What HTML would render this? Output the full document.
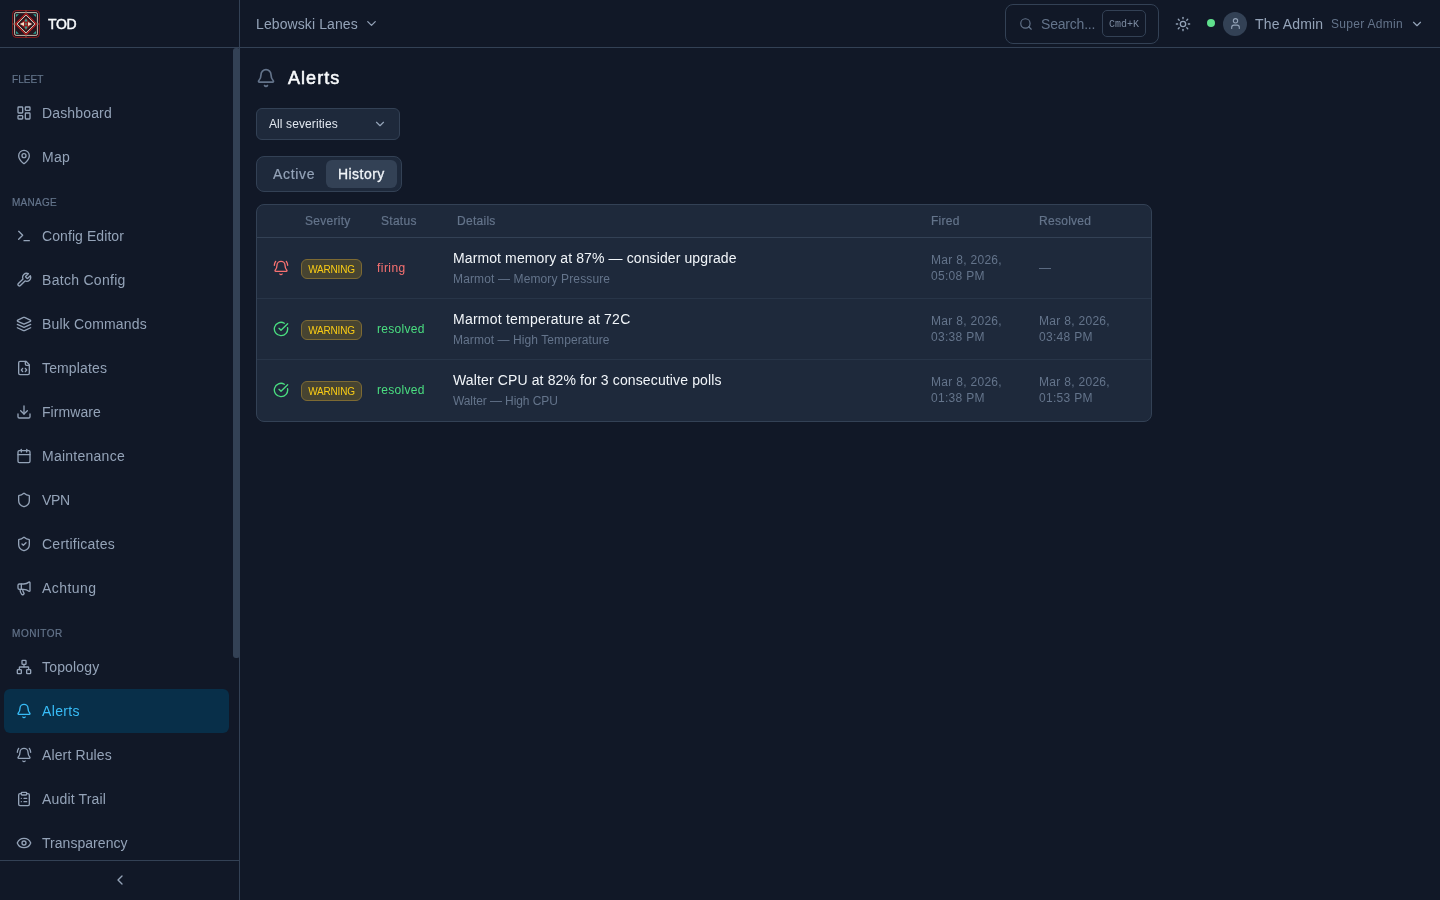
<!DOCTYPE html><html><head><meta charset="utf-8"><style>
*{box-sizing:border-box;margin:0;padding:0}
html,body{width:1440px;height:900px;overflow:hidden;-webkit-font-smoothing:antialiased;background:#111827;font-family:"Liberation Sans",sans-serif;color:#e2e8f0}
.a{position:absolute;white-space:nowrap}
svg.i{position:absolute;fill:none;stroke:currentColor;stroke-linecap:round;stroke-linejoin:round}
.sec{position:absolute;left:12px;font-size:10px;letter-spacing:0.05px;color:#64748b;line-height:12px;-webkit-text-stroke:0.2px #64748b}
.it{position:absolute;left:4px;width:225px;height:44px;border-radius:6px;color:#94a3b8;font-size:14px}
.it span{position:absolute;left:38px;top:12px;line-height:20px;letter-spacing:0.25px}
.it.act{background:#082f49;color:#38bdf8}
.th{position:absolute;top:213px;font-size:12px;line-height:16px;color:#64748b;letter-spacing:0.28px;-webkit-text-stroke:0.2px #64748b}
.badge{position:absolute;width:61px;height:20px;border-radius:6px;border:1px solid #7d6a33;background:rgba(234,179,8,0.2);color:#facc15;font-size:10px;line-height:20px;text-align:center;letter-spacing:-0.2px}
.t1{position:absolute;left:453px;font-size:14px;line-height:20px;color:#f1f5f9;letter-spacing:0.11px}
.t2{position:absolute;left:453px;font-size:12px;line-height:16px;color:#64748b;letter-spacing:0.13px}
.dt{position:absolute;font-size:12px;line-height:16px;color:#64748b;letter-spacing:0.3px}
.st{position:absolute;left:377px;font-size:12px;line-height:16px;letter-spacing:0.45px}
</style></head><body><div id="root" style="position:absolute;left:0;top:0;width:1440px;height:900px;will-change:transform">
<div class="a" style="left:0;top:0;width:240px;height:900px;border-right:1px solid #334155"></div>
<div class="a" style="left:0;top:47px;width:240px;height:1px;background:#334155"></div>
<svg class="a" style="left:12px;top:9.5px" width="28" height="28" viewBox="0 0 28 28">
  <rect x="0.6" y="0.6" width="26.8" height="26.8" rx="3.5" fill="#1a1220" stroke="#911d1d" stroke-width="1"/>
  <rect x="2.6" y="2.6" width="22.8" height="22.8" rx="1.5" fill="#26161f" stroke="#c4bdad" stroke-width="1"/>
  <path d="M14 0.5V3 M14 25V27.5 M0.5 14H3 M25 14H27.5" stroke="#8a8070" stroke-width="0.8"/>
  <path d="M14 3.4 L24.6 14 L14 24.6 L3.4 14Z" fill="none" stroke="#b42020" stroke-width="1.3"/>
  <path d="M14 5.1 L22.9 14 L14 22.9 L5.1 14Z" fill="none" stroke="#ddd5c2" stroke-width="1"/>
  <path d="M14 8 L20 14 L14 20 L8 14Z" fill="#951b1b"/>
  <path d="M7.8 14 L12 11.9 L12 16.1Z M20.2 14 L16 11.9 L16 16.1Z" fill="#efe4cc"/>
  <path d="M14 8.3 L15.7 11.6 L12.3 11.6Z M14 19.7 L15.7 16.4 L12.3 16.4Z" fill="#2aa597"/>
  <circle cx="14" cy="14" r="1.2" fill="#2aa597" stroke="#b42020" stroke-width="0.6"/>
  <path d="M4 4.2 L7 4.2 L4 7Z M24 4.2 L21 4.2 L24 7Z M4 23.8 L7 23.8 L4 21Z M24 23.8 L21 23.8 L24 21Z" fill="#25a093"/>
</svg>
<div class="a" style="left:48px;top:14px;font-size:14px;line-height:20px;color:#f8fafc;letter-spacing:-0.3px;-webkit-text-stroke:0.45px #f8fafc">TOD</div>
<div class="a" style="left:233px;top:48px;width:7px;height:610px;background:#334155;border-radius:3px 3px 3px 3px"></div>
<div class="sec" style="top:74.4px;letter-spacing:0.05px">FLEET</div>
<div class="sec" style="top:197.4px;letter-spacing:0.25px">MANAGE</div>
<div class="sec" style="top:628.4px;letter-spacing:0.55px">MONITOR</div>
<div class="it" style="top:91px"><svg class="i" style="left:12px;top:14px;width:16px;height:16px;color:#94a3b8;" viewBox="0 0 24 24" stroke-width="2"><rect width="7" height="9" x="3" y="3" rx="1"/><rect width="7" height="5" x="14" y="3" rx="1"/><rect width="7" height="9" x="14" y="12" rx="1"/><rect width="7" height="5" x="3" y="16" rx="1"/></svg><span style="letter-spacing:0.15px">Dashboard</span></div>
<div class="it" style="top:135px"><svg class="i" style="left:12px;top:14px;width:16px;height:16px;color:#94a3b8;" viewBox="0 0 24 24" stroke-width="2"><path d="M20 10c0 4.993-5.539 10.193-7.399 11.799a1 1 0 0 1-1.202 0C9.539 20.193 4 14.993 4 10a8 8 0 0 1 16 0"/><circle cx="12" cy="10" r="3"/></svg><span style="letter-spacing:0.25px">Map</span></div>
<div class="it" style="top:214px"><svg class="i" style="left:12px;top:14px;width:16px;height:16px;color:#94a3b8;" viewBox="0 0 24 24" stroke-width="2"><polyline points="4 17 10 11 4 5"/><line x1="12" x2="20" y1="19" y2="19"/></svg><span style="letter-spacing:0.08px">Config Editor</span></div>
<div class="it" style="top:258px"><svg class="i" style="left:12px;top:14px;width:16px;height:16px;color:#94a3b8;" viewBox="0 0 24 24" stroke-width="2"><path d="M14.7 6.3a1 1 0 0 0 0 1.4l1.6 1.6a1 1 0 0 0 1.4 0l3.77-3.77a6 6 0 0 1-7.94 7.94l-6.91 6.91a2.12 2.12 0 0 1-3-3l6.91-6.91a6 6 0 0 1 7.940-7.94l-3.76 3.76z"/></svg><span style="letter-spacing:0.29px">Batch Config</span></div>
<div class="it" style="top:302px"><svg class="i" style="left:12px;top:14px;width:16px;height:16px;color:#94a3b8;" viewBox="0 0 24 24" stroke-width="2"><path d="m12.83 2.18a2 2 0 0 0-1.66 0L2.6 6.08a1 1 0 0 0 0 1.83l8.58 3.91a2 2 0 0 0 1.66 0l8.58-3.9a1 1 0 0 0 0-1.83Z"/><path d="m22 17.65-9.17 4.16a2 2 0 0 1-1.66 0L2 17.65"/><path d="m22 12.65-9.17 4.16a2 2 0 0 1-1.66 0L2 12.65"/></svg><span style="letter-spacing:0.17px">Bulk Commands</span></div>
<div class="it" style="top:346px"><svg class="i" style="left:12px;top:14px;width:16px;height:16px;color:#94a3b8;" viewBox="0 0 24 24" stroke-width="2"><path d="M10 12.5 8 15l2 2.5"/><path d="m14 12.5 2 2.5-2 2.5"/><path d="M14 2v4a2 2 0 0 0 2 2h4"/><path d="M15 2H6a2 2 0 0 0-2 2v16a2 2 0 0 0 2 2h12a2 2 0 0 0 2-2V7z"/></svg><span style="letter-spacing:0.14px">Templates</span></div>
<div class="it" style="top:390px"><svg class="i" style="left:12px;top:14px;width:16px;height:16px;color:#94a3b8;" viewBox="0 0 24 24" stroke-width="2"><path d="M21 15v4a2 2 0 0 1-2 2H5a2 2 0 0 1-2-2v-4"/><polyline points="7 10 12 15 17 10"/><line x1="12" x2="12" y1="15" y2="3"/></svg><span style="letter-spacing:0.06px">Firmware</span></div>
<div class="it" style="top:434px"><svg class="i" style="left:12px;top:14px;width:16px;height:16px;color:#94a3b8;" viewBox="0 0 24 24" stroke-width="2"><path d="M8 2v4"/><path d="M16 2v4"/><rect width="18" height="18" x="3" y="4" rx="2"/><path d="M3 10h18"/></svg><span style="letter-spacing:0.25px">Maintenance</span></div>
<div class="it" style="top:478px"><svg class="i" style="left:12px;top:14px;width:16px;height:16px;color:#94a3b8;" viewBox="0 0 24 24" stroke-width="2"><path d="M20 13c0 5-3.5 7.5-7.66 8.95a1 1 0 0 1-.67-.01C7.5 20.5 4 18 4 13V6a1 1 0 0 1 1-1c2 0 4.5-1.2 6.24-2.72a1.17 1.17 0 0 1 1.52 0C14.51 3.81 17 5 19 5a1 1 0 0 1 1 1z"/></svg><span style="letter-spacing:-0.3px">VPN</span></div>
<div class="it" style="top:522px"><svg class="i" style="left:12px;top:14px;width:16px;height:16px;color:#94a3b8;" viewBox="0 0 24 24" stroke-width="2"><path d="M20 13c0 5-3.5 7.5-7.66 8.95a1 1 0 0 1-.67-.01C7.5 20.5 4 18 4 13V6a1 1 0 0 1 1-1c2 0 4.5-1.2 6.24-2.72a1.17 1.17 0 0 1 1.52 0C14.51 3.81 17 5 19 5a1 1 0 0 1 1 1z"/><path d="m9 12 2 2 4-4"/></svg><span style="letter-spacing:0.25px">Certificates</span></div>
<div class="it" style="top:566px"><svg class="i" style="left:12px;top:14px;width:16px;height:16px;color:#94a3b8;" viewBox="0 0 24 24" stroke-width="2"><path d="M11 6a13 13 0 0 0 8.4-2.8A1 1 0 0 1 21 4v12a1 1 0 0 1-1.6.8A13 13 0 0 0 11 14H5a2 2 0 0 1-2-2V8a2 2 0 0 1 2-2z"/><path d="M6 14a12 12 0 0 0 2.4 7.2 2 2 0 0 0 3.2-2.4A8 8 0 0 1 10 14"/><path d="M8 6v8"/></svg><span style="letter-spacing:0.45px">Achtung</span></div>
<div class="it" style="top:645px"><svg class="i" style="left:12px;top:14px;width:16px;height:16px;color:#94a3b8;" viewBox="0 0 24 24" stroke-width="2"><rect x="16" y="16" width="6" height="6" rx="1"/><rect x="2" y="16" width="6" height="6" rx="1"/><rect x="9" y="2" width="6" height="6" rx="1"/><path d="M5 16v-3a1 1 0 0 1 1-1h12a1 1 0 0 1 1 1v3"/><path d="M12 12V8"/></svg><span style="letter-spacing:0.18px">Topology</span></div>
<div class="it act" style="top:689px"><svg class="i" style="left:12px;top:14px;width:16px;height:16px;color:#38bdf8;" viewBox="0 0 24 24" stroke-width="2"><path d="M10.268 21a2 2 0 0 0 3.464 0"/><path d="M3.262 15.326A1 1 0 0 0 4 17h16a1 1 0 0 0 .74-1.673C19.41 13.956 18 12.499 18 8A6 6 0 0 0 6 8c0 4.499-1.411 5.956-2.738 7.326"/></svg><span style="letter-spacing:0.35px">Alerts</span></div>
<div class="it" style="top:733px"><svg class="i" style="left:12px;top:14px;width:16px;height:16px;color:#94a3b8;" viewBox="0 0 24 24" stroke-width="2"><path d="M10.268 21a2 2 0 0 0 3.464 0"/><path d="M22 8c0-2.3-.8-4.3-2-6"/><path d="M3.262 15.326A1 1 0 0 0 4 17h16a1 1 0 0 0 .74-1.673C19.41 13.956 18 12.499 18 8A6 6 0 0 0 6 8c0 4.499-1.411 5.956-2.738 7.326"/><path d="M4 2C2.800 3.7 2 5.7 2 8"/></svg><span style="letter-spacing:0.12px">Alert Rules</span></div>
<div class="it" style="top:777px"><svg class="i" style="left:12px;top:14px;width:16px;height:16px;color:#94a3b8;" viewBox="0 0 24 24" stroke-width="2"><rect width="8" height="4" x="8" y="2" rx="1" ry="1"/><path d="M16 4h2a2 2 0 0 1 2 2v14a2 2 0 0 1-2 2H6a2 2 0 0 1-2-2V6a2 2 0 0 1 2-2h2"/><path d="M12 11h4"/><path d="M12 16h4"/><path d="M8 11h.01"/><path d="M8 16h.01"/></svg><span style="letter-spacing:0.16px">Audit Trail</span></div>
<div class="it" style="top:821px"><svg class="i" style="left:12px;top:14px;width:16px;height:16px;color:#94a3b8;" viewBox="0 0 24 24" stroke-width="2"><path d="M2.062 12.348a1 1 0 0 1 0-.696 10.75 10.75 0 0 1 19.876 0 1 1 0 0 1 0 .696 10.75 10.75 0 0 1-19.876 0"/><circle cx="12" cy="12" r="3"/></svg><span style="letter-spacing:0.04px">Transparency</span></div>
<div class="a" style="left:0;top:860px;width:239px;height:1px;background:#334155"></div>
<svg class="i" style="left:111.5px;top:872px;width:16px;height:16px;color:#94a3b8;" viewBox="0 0 24 24" stroke-width="2"><path d="m15 18-6-6 6-6"/></svg>
<div class="a" style="left:240px;top:47px;width:1200px;height:1px;background:#334155"></div>
<div class="a" style="left:256px;top:14px;font-size:14px;line-height:20px;color:#94a3b8;letter-spacing:0.1px">Lebowski Lanes</div>
<svg class="i" style="left:364px;top:16px;width:15px;height:15px;color:#94a3b8;" viewBox="0 0 24 24" stroke-width="2"><path d="m6 9 6 6 6-6"/></svg>
<div class="a" style="left:1005px;top:4px;width:154px;height:40px;border:1px solid #334155;border-radius:8px"></div>
<svg class="i" style="left:1018.5px;top:16.5px;width:14px;height:14px;color:#64748b;" viewBox="0 0 24 24" stroke-width="2"><circle cx="11" cy="11" r="8"/><path d="m21 21-4.3-4.3"/></svg>
<div class="a" style="left:1041px;top:14px;font-size:14px;line-height:20px;color:#64748b;letter-spacing:-0.2px">Search...</div>
<div class="a" style="left:1102px;top:10px;width:44px;height:27px;border:1px solid #334155;border-radius:5px;font-family:'Liberation Mono',monospace;font-size:10px;line-height:27px;text-align:center;color:#7c8ba1">Cmd+K</div>
<svg class="i" style="left:1175px;top:15.5px;width:16px;height:16px;color:#94a3b8;" viewBox="0 0 24 24" stroke-width="2"><circle cx="12" cy="12" r="4"/><path d="M12 2v2"/><path d="M12 20v2"/><path d="m4.93 4.93 1.41 1.41"/><path d="m17.66 17.66 1.41 1.41"/><path d="M2 12h2"/><path d="M20 12h2"/><path d="m6.34 17.66-1.41 1.41"/><path d="m19.07 4.93-1.41 1.41"/></svg>
<div class="a" style="left:1207px;top:19px;width:8px;height:8px;border-radius:50%;background:#5fe08d"></div>
<div class="a" style="left:1223px;top:11.5px;width:24px;height:24px;border-radius:50%;background:#334155"></div>
<svg class="i" style="left:1228.5px;top:16.8px;width:13px;height:13px;color:#94a3b8;" viewBox="0 0 24 24" stroke-width="2"><path d="M19 21v-2a4 4 0 0 0-4-4H9a4 4 0 0 0-4 4v2"/><circle cx="12" cy="7" r="4"/></svg>
<div class="a" style="left:1255px;top:14px;font-size:14px;line-height:20px;color:#94a3b8;letter-spacing:0.15px">The Admin</div>
<div class="a" style="left:1331px;top:16px;font-size:12px;line-height:16px;color:#64748b;letter-spacing:0.3px">Super Admin</div>
<svg class="i" style="left:1410px;top:17px;width:14px;height:14px;color:#94a3b8;" viewBox="0 0 24 24" stroke-width="2"><path d="m6 9 6 6 6-6"/></svg>
<svg class="i" style="left:256px;top:68px;width:20px;height:20px;color:#64748b;" viewBox="0 0 24 24" stroke-width="2"><path d="M10.268 21a2 2 0 0 0 3.464 0"/><path d="M3.262 15.326A1 1 0 0 0 4 17h16a1 1 0 0 0 .74-1.673C19.41 13.956 18 12.499 18 8A6 6 0 0 0 6 8c0 4.499-1.411 5.956-2.738 7.326"/></svg>
<div class="a" style="left:288px;top:64px;font-size:18px;line-height:28px;color:#f8fafc;letter-spacing:1.05px;-webkit-text-stroke:0.55px #f8fafc">Alerts</div>
<div class="a" style="left:256px;top:108px;width:144px;height:32px;border:1px solid #334155;background:#1e293b;border-radius:6px"></div>
<div class="a" style="left:269px;top:116px;font-size:12px;line-height:16px;color:#e2e8f0;letter-spacing:0.1px">All severities</div>
<svg class="i" style="left:373px;top:117px;width:14px;height:14px;color:#94a3b8;" viewBox="0 0 24 24" stroke-width="2"><path d="m6 9 6 6 6-6"/></svg>
<div class="a" style="left:256px;top:156px;width:146px;height:36px;border:1px solid #334155;background:#1e293b;border-radius:8px"></div>
<div class="a" style="left:326px;top:160px;width:71px;height:28px;background:#334155;border-radius:6px"></div>
<div class="a" style="left:273px;top:164px;font-size:14px;line-height:20px;color:#94a3b8;letter-spacing:0.66px;-webkit-text-stroke:0.2px #94a3b8">Active</div>
<div class="a" style="left:338px;top:164px;font-size:14px;line-height:20px;color:#f1f5f9;letter-spacing:0.45px;-webkit-text-stroke:0.3px #f1f5f9">History</div>
<div class="a" style="left:256px;top:204px;width:896px;height:218px;border:1px solid #334155;background:#1e293b;border-radius:8px"></div>
<div class="a" style="left:257px;top:237px;width:894px;height:1px;background:#334155"></div>
<div class="a" style="left:257px;top:298px;width:894px;height:1px;background:#283548"></div>
<div class="a" style="left:257px;top:359px;width:894px;height:1px;background:#283548"></div>
<div class="th" style="left:305px">Severity</div>
<div class="th" style="left:381px">Status</div>
<div class="th" style="left:457px">Details</div>
<div class="th" style="left:931px">Fired</div>
<div class="th" style="left:1039px">Resolved</div>
<svg class="i" style="left:273px;top:260px;width:16px;height:16px;color:#f87171;" viewBox="0 0 24 24" stroke-width="2"><path d="M10.268 21a2 2 0 0 0 3.464 0"/><path d="M22 8c0-2.3-.8-4.3-2-6"/><path d="M3.262 15.326A1 1 0 0 0 4 17h16a1 1 0 0 0 .74-1.673C19.41 13.956 18 12.499 18 8A6 6 0 0 0 6 8c0 4.499-1.411 5.956-2.738 7.326"/><path d="M4 2C2.800 3.7 2 5.7 2 8"/></svg>
<div class="badge" style="left:301px;top:259px">WARNING</div>
<div class="st" style="top:259.6px;color:#f87171;letter-spacing:0.45px">firing</div>
<div class="t1" style="top:248.4px;letter-spacing:0.11px">Marmot memory at 87% — consider upgrade</div>
<div class="t2" style="top:271px;letter-spacing:0.13px">Marmot — Memory Pressure</div>
<div class="dt" style="left:931px;top:252px">Mar 8, 2026,<br>05:08 PM</div>
<div class="dt" style="left:1039px;top:260px">—</div>
<svg class="i" style="left:273px;top:321px;width:16px;height:16px;color:#4ade80;" viewBox="0 0 24 24" stroke-width="2"><path d="M21.801 10A10 10 0 1 1 17 3.335"/><path d="m9 11 3 3L22 4"/></svg>
<div class="badge" style="left:301px;top:320px">WARNING</div>
<div class="st" style="top:320.6px;color:#4ade80;letter-spacing:0.3px">resolved</div>
<div class="t1" style="top:309.4px;letter-spacing:0.22px">Marmot temperature at 72C</div>
<div class="t2" style="top:332px;letter-spacing:0.08px">Marmot — High Temperature</div>
<div class="dt" style="left:931px;top:313px">Mar 8, 2026,<br>03:38 PM</div>
<div class="dt" style="left:1039px;top:313px">Mar 8, 2026,<br>03:48 PM</div>
<svg class="i" style="left:273px;top:382px;width:16px;height:16px;color:#4ade80;" viewBox="0 0 24 24" stroke-width="2"><path d="M21.801 10A10 10 0 1 1 17 3.335"/><path d="m9 11 3 3L22 4"/></svg>
<div class="badge" style="left:301px;top:381px">WARNING</div>
<div class="st" style="top:381.6px;color:#4ade80;letter-spacing:0.3px">resolved</div>
<div class="t1" style="top:370.4px;letter-spacing:0.13px">Walter CPU at 82% for 3 consecutive polls</div>
<div class="t2" style="top:393px;letter-spacing:-0.09px">Walter — High CPU</div>
<div class="dt" style="left:931px;top:374px">Mar 8, 2026,<br>01:38 PM</div>
<div class="dt" style="left:1039px;top:374px">Mar 8, 2026,<br>01:53 PM</div>
</div></body></html>
